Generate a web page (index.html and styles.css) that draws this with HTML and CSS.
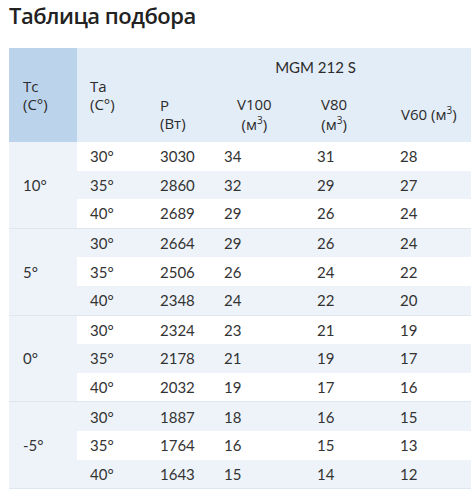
FILE: index.html
```html
<!DOCTYPE html>
<html lang="ru">
<head>
<meta charset="utf-8">
<title>Таблица подбора</title>
<link rel="stylesheet" href="styles.css">
</head>
<body>
<h1 class="title">Таблица подбора</h1>
<table class="sel">
  <colgroup>
    <col class="c-tc"><col class="c-ta"><col class="c-p"><col class="c-v100"><col class="c-v80"><col class="c-v60">
  </colgroup>
  <thead>
    <tr class="h1">
      <th rowspan="2" class="th-tc"><span class="stack left">Tc<br>(C°)</span></th>
      <th rowspan="2" class="th-ta"><span class="stack left">Ta<br>(C°)</span></th>
      <th colspan="4" class="th-model">MGM 212 S</th>
    </tr>
    <tr class="h2">
      <th class="th-p"><span class="stack left">P<br>(Вт)</span></th>
      <th class="th-v100"><span class="stack tall">V100<br>(м<sup>3</sup>)</span></th>
      <th class="th-v80"><span class="stack tall">V80<br>(м<sup>3</sup>)</span></th>
      <th class="th-v60"><span class="stack">V60 (м<sup>3</sup>)</span></th>
    </tr>
  </thead>
  <tbody class="grp">
    <tr class="odd"><td rowspan="3" class="tc">10°</td><td>30°</td><td>3030</td><td>34</td><td>31</td><td>28</td></tr>
    <tr class="even"><td>35°</td><td>2860</td><td>32</td><td>29</td><td>27</td></tr>
    <tr class="odd"><td>40°</td><td>2689</td><td>29</td><td>26</td><td>24</td></tr>
  </tbody>
  <tbody class="grp">
    <tr class="even"><td rowspan="3" class="tc">5°</td><td>30°</td><td>2664</td><td>29</td><td>26</td><td>24</td></tr>
    <tr class="odd"><td>35°</td><td>2506</td><td>26</td><td>24</td><td>22</td></tr>
    <tr class="even"><td>40°</td><td>2348</td><td>24</td><td>22</td><td>20</td></tr>
  </tbody>
  <tbody class="grp">
    <tr class="odd"><td rowspan="3" class="tc">0°</td><td>30°</td><td>2324</td><td>23</td><td>21</td><td>19</td></tr>
    <tr class="even"><td>35°</td><td>2178</td><td>21</td><td>19</td><td>17</td></tr>
    <tr class="odd"><td>40°</td><td>2032</td><td>19</td><td>17</td><td>16</td></tr>
  </tbody>
  <tbody class="grp">
    <tr class="even"><td rowspan="3" class="tc">-5°</td><td>30°</td><td>1887</td><td>18</td><td>16</td><td>15</td></tr>
    <tr class="odd"><td>35°</td><td>1764</td><td>16</td><td>15</td><td>13</td></tr>
    <tr class="even"><td>40°</td><td>1643</td><td>15</td><td>14</td><td>12</td></tr>
  </tbody>
</table>
</body>
</html>
```

FILE: styles.css
```css
html, body {
  margin: 0;
  padding: 0;
  background: #ffffff;
}
body {
  padding: 0 4px 0 9px;
  font-family: "Lato", "Open Sans", sans-serif;
  color: #333333;
}
.title {
  margin: 0;
  font-family: "Open Sans", sans-serif;
  font-weight: 600;
  font-size: 22px;
  line-height: 30px;
  letter-spacing: -0.5px;
  color: #222222;
}
.sel {
  margin-top: 18px;
  width: 462px;
  border-collapse: collapse;
  table-layout: fixed;
  font-size: 15px;
}
.c-tc { width: 68px; }
.c-ta { width: 70px; }
.c-p { width: 64px; }
.c-v100 { width: 93px; }
.c-v80 { width: 83px; }
.c-v60 { width: 84px; }

thead th {
  background: #e3edf8;
  font-weight: 400;
  text-align: left;
  vertical-align: middle;
  padding: 0 0 0 13px;
  font-family: "Open Sans", sans-serif;
  font-size: 15px;
  line-height: 18px;
  color: #2b2b2b;
}
thead .th-tc {
  background: #bcd4eb;
  padding-left: 14px;
}
.h1 { height: 38px; }
.h2 { height: 56px; }
thead .th-model {
  text-align: center;
  font-family: "Lato", sans-serif;
  font-size: 15px;
}
.stack {
  display: inline-block;
  text-align: center;
}
.stack.left { text-align: left; }
.stack.tall { line-height: 20px; }
.stack sup {
  font-size: 10px;
  line-height: 0;
  vertical-align: 6px;
}
thead .th-v100 { padding-left: 26px; }
thead .th-v80 { padding-left: 17px; }
thead .th-v60 { padding-left: 14px; }

tbody td {
  height: 28.6px;
  padding: 0 0 0 13px;
  vertical-align: middle;
  line-height: 18px;
}
tbody.grp { border-bottom: 1px solid #dfe6ef; }
tr.even td { background: #eef3fa; }
tr.odd td { background: #ffffff; }
tbody td.tc {
  background: #eef3fa;
  padding-left: 14px;
}
```
